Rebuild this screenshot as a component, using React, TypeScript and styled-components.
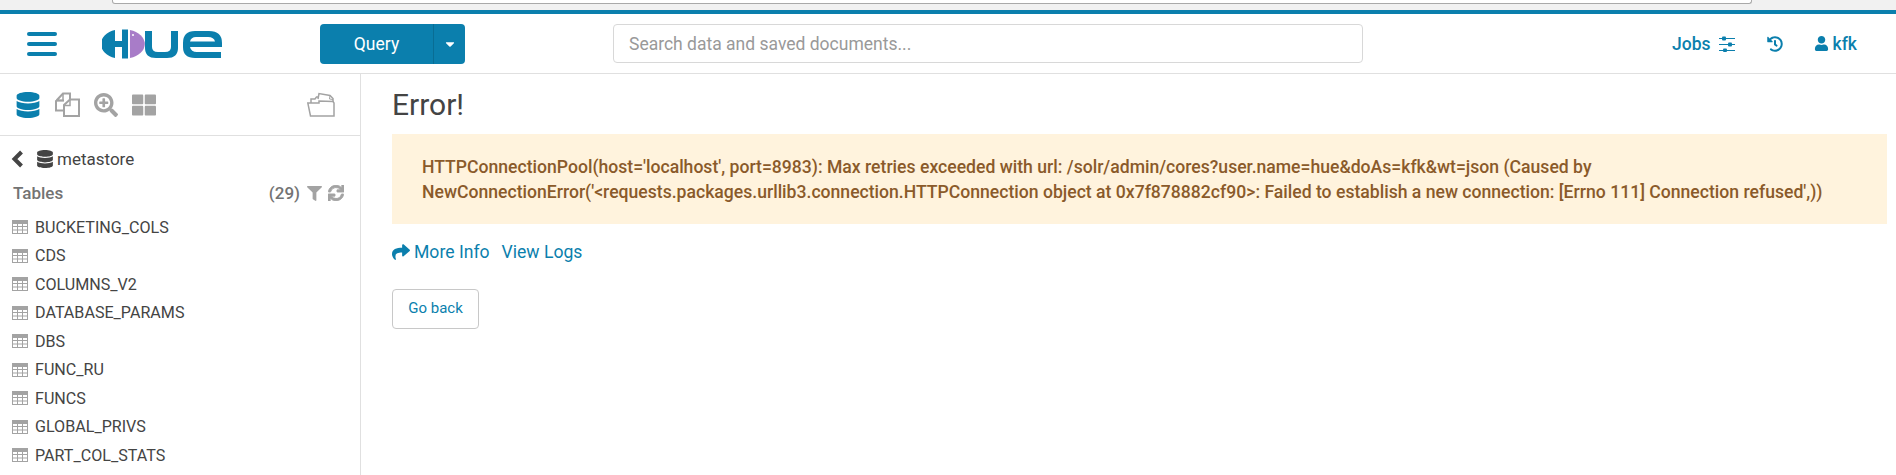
import React from 'react';
import styled, { createGlobalStyle } from 'styled-components';
import { FaCaretDown, FaDatabase, FaFilter, FaHistory, FaShare, FaSync, FaThLarge, FaUser, FaSearchPlus } from 'react-icons/fa';

const TABLES = ['BUCKETING_COLS', 'CDS', 'COLUMNS_V2', 'DATABASE_PARAMS', 'DBS', 'FUNC_RU', 'FUNCS', 'GLOBAL_PRIVS', 'PART_COL_STATS'];

const BLUE = '#0b7fad';
const GREY = '#a3a3a3';

const Global = createGlobalStyle`
  html, body { margin: 0; padding: 0; height: 475px; overflow: hidden; background: #fff; }
  body { font-family: Roboto, "Liberation Sans", sans-serif; color: #444; }
`;

const Page = styled.div`
  display: flex;
  flex-direction: column;
  height: 475px;
  overflow: hidden;
`;

const Chrome = styled.div`
  height: 10px;
  background: #f1f1f1;
  padding: 0 144px 0 112px;
`;

const AddressBox = styled.div`
  height: 3px;
  background: #fff;
  border: 1px solid #a9a9a9;
  border-top: 0;
  border-radius: 0 0 3px 3px;
`;

const Nav = styled.header`
  height: 59px;
  border-top: 4px solid ${BLUE};
  border-bottom: 1px solid #e0e0e0;
  display: flex;
  align-items: center;
  flex-shrink: 0;
`;

const Burger = styled.div`
  width: 102px;
  padding-left: 27px;
  box-sizing: border-box;
  display: flex;
  flex-direction: column;
  gap: 6px;
`;

const BurgerLine = styled.span`
  display: block;
  width: 30px;
  height: 4px;
  border-radius: 2px;
  background: ${BLUE};
`;

const Logo = styled.svg`
  width: 120px;
  height: 30px;
  margin-right: 98px;
`;

const QueryGroup = styled.div`
  display: flex;
  width: 145px;
  height: 40px;
  border-radius: 4px;
  background: ${BLUE};
  color: #fff;
  margin-right: 148px;
`;

const QueryLabel = styled.div`
  width: 113px;
  display: flex;
  align-items: center;
  justify-content: center;
  font-size: 17.5px;
  border-right: 1px solid #096d94;
`;

const QueryCaret = styled.div`
  flex: 1;
  display: flex;
  align-items: center;
  justify-content: center;
  font-size: 14px;
`;

const Search = styled.div`
  width: 750px;
  height: 39px;
  box-sizing: border-box;
  border: 1px solid #d8d8d8;
  border-radius: 4px;
  padding: 0 15px;
  display: flex;
  align-items: center;
  color: #999;
  font-size: 17.5px;
`;

const NavRight = styled.div`
  margin-left: auto;
  display: flex;
  align-items: center;
  padding-right: 39px;
  color: ${BLUE};
  font-size: 17.5px;
  font-weight: 500;
`;

const NavItem = styled.span<{ $gap: number; $after: number }>`
  display: flex;
  align-items: center;
  gap: ${(p) => p.$gap}px;
  margin-right: ${(p) => p.$after}px;
`;

const Body = styled.div`
  display: flex;
  flex: 1;
  min-height: 0;
`;

const Side = styled.aside`
  width: 361px;
  box-sizing: border-box;
  border-right: 1px solid #e0e0e0;
  flex-shrink: 0;
  overflow: hidden;
`;

const SideTabs = styled.div`
  height: 62px;
  box-sizing: border-box;
  border-bottom: 1px solid #e0e0e0;
  display: flex;
  align-items: center;
  padding: 0 25px 0 15px;
  gap: 14px;
`;

const TabIcon = styled.span<{ $active?: boolean; $size: number }>`
  display: flex;
  color: ${(p) => (p.$active ? BLUE : GREY)};
  font-size: ${(p) => p.$size}px;
`;

const FolderIcon = styled(TabIcon)`
  margin-left: auto;
`;

const Crumb = styled.div`
  display: flex;
  align-items: center;
  height: 46px;
  padding-left: 11px;
  font-size: 17px;
  color: #444;
`;

const BackGlyph = styled.svg`
  width: 13px;
  height: 18px;
  margin-right: 12px;
`;

const DbIcon = styled.span`
  display: flex;
  font-size: 18px;
  margin-right: 3px;
`;

const TablesHead = styled.div`
  display: flex;
  align-items: center;
  height: 20px;
  margin: 1px 0 10px;
  padding: 0 16px 0 13px;
  font-size: 17px;
  font-weight: 500;
  color: #737373;
`;

const Count = styled.span`
  margin-left: auto;
  margin-right: 7px;
`;

const HeadIcon = styled.span`
  display: flex;
  color: ${GREY};
  font-size: 15px;
  margin-right: 6px;
  &:last-child { margin-right: 0; font-size: 16px; }
`;

const TableRow = styled.div`
  display: flex;
  align-items: center;
  height: 28.5px;
  padding-left: 12px;
  font-size: 16.1px;
  color: #444;
`;

const TableGlyph = styled.svg`
  width: 16px;
  height: 14px;
  margin-right: 7px;
`;

const Main = styled.main`
  flex: 1;
  min-width: 0;
  padding: 0 9px 0 31px;
`;

const Title = styled.h1`
  margin: 0;
  height: 60px;
  display: flex;
  align-items: center;
  font-size: 30px;
  font-weight: 400;
  color: #444;
`;

const Alert = styled.div`
  background: #fff3dd;
  color: #8a5a2a;
  font-size: 17.6px;
  font-weight: 500;
  line-height: 25px;
  height: 90px;
  box-sizing: border-box;
  padding: 21px 30px 0;
`;

const Links = styled.div`
  display: flex;
  align-items: center;
  gap: 12px;
  margin-top: 18px;
  color: ${BLUE};
  font-size: 17.6px;
`;

const LinkItem = styled.span`
  display: flex;
  align-items: center;
  gap: 4px;
`;

const BackButton = styled.button`
  display: block;
  margin-top: 27px;
  width: 87px;
  height: 40px;
  padding: 0 0 2px;
  border: 1px solid #c8c8c8;
  border-radius: 4px;
  background: #fff;
  color: ${BLUE};
  font-family: inherit;
  font-size: 15px;
`;

function SlidersGlyph() {
  return (
    <svg width="16" height="16" viewBox="0 0 16 16" fill="currentColor">
      <rect x="0" y="2" width="16" height="1" />
      <rect x="3" y="0.5" width="4" height="4" rx="1" />
      <rect x="0" y="8" width="16" height="1" />
      <rect x="9" y="6.5" width="4" height="4" rx="1" />
      <rect x="0" y="14" width="16" height="1" />
      <rect x="4" y="12.5" width="4" height="3.5" rx="1" />
    </svg>
  );
}

function FilesGlyph() {
  return (
    <svg width="25" height="25" viewBox="0 0 25 25" fill="none" stroke="currentColor" strokeWidth="2">
      <path d="M9 8.5 H2 V8 L8 1.5 H15 V7 M2 8.5 L1 9 V18.5 H8" />
      <path d="M8 1.5 V8.5 H1.5" strokeWidth="1.5" />
      <path d="M15 7.5 H24 V24 H9 V13 Z" fill="#fff" />
      <path d="M15 8 V13.5 H9" strokeWidth="1.5" />
    </svg>
  );
}

function FolderGlyph() {
  return (
    <svg width="28" height="25" viewBox="0 0 28 25" fill="none" stroke="currentColor" strokeWidth="1.5">
      <path d="M11 7 L12 1.5 L23 3.5 L26 6.5 V10" />
      <path d="M23 3.5 L22.5 7 L26 7.5" strokeWidth="1" />
      <path d="M4 11 V7 H8 L9.5 5 H11" />
      <path d="M12 11 V9 L26 9.5 L27 11 V24 H3.5 L0.8 11 Z" />
    </svg>
  );
}

function TableGlyphIcon() {
  return (
    <TableGlyph viewBox="0 0 16 14" fill="none">
      <rect x="0.5" y="0.5" width="15" height="13" stroke={GREY} />
      <rect x="0.5" y="0.5" width="15" height="3" fill={GREY} stroke={GREY} />
      <path d="M0 6.5 H16 M0 10 H16 M5.5 3 V14 M10.5 3 V14" stroke={GREY} />
    </TableGlyph>
  );
}

export default function App() {
  return (
    <Page>
      <Global />
      <Chrome><AddressBox /></Chrome>
      <Nav>
        <Burger><BurgerLine /><BurgerLine /><BurgerLine /></Burger>
        <Logo viewBox="0 0 120 30">
          <path d="M13 1 A19 14.5 0 0 0 13 29 Z" fill={BLUE} />
          <rect x="12" y="12" width="9" height="6" fill={BLUE} />
          <path d="M20 0.5 H26 V29.5 H20 Z" fill={BLUE} />
          <path d="M28 1 A20 14.5 0 0 1 28 29 Z" fill="#a87cc8" />
          <circle cx="31" cy="6" r="1" fill="#fff" />
          <path d="M43 2 H50 V18 Q50 23 56 23 H63 Q69 23 69 18 V2 H76 V19 Q76 29 65 29 H54 Q43 29 43 19 Z" fill={BLUE} />
          <path d="M81 14 Q81 2 93 2 H107 Q120 2 120 14 V18 H88 Q89 23 95 23 H119 V29 H93 Q81 29 81 18 Z M88 12.5 H113 Q112 8 106 8 H94 Q89 8 88 12.5 Z" fill={BLUE} fillRule="evenodd" />
        </Logo>
        <QueryGroup>
          <QueryLabel>Query</QueryLabel>
          <QueryCaret><FaCaretDown /></QueryCaret>
        </QueryGroup>
        <Search>Search data and saved documents...</Search>
        <NavRight>
          <NavItem $gap={8} $after={32}>Jobs <SlidersGlyph /></NavItem>
          <NavItem $gap={0} $after={31}><FaHistory size={16} /></NavItem>
          <NavItem $gap={4} $after={0}><FaUser size={15} />kfk</NavItem>
        </NavRight>
      </Nav>
      <Body>
        <Side>
          <SideTabs>
            <TabIcon $active $size={26}><FaDatabase /></TabIcon>
            <TabIcon $size={25}><FilesGlyph /></TabIcon>
            <TabIcon $size={24}><FaSearchPlus /></TabIcon>
            <TabIcon $size={24}><FaThLarge /></TabIcon>
            <FolderIcon $size={28}><FolderGlyph /></FolderIcon>
          </SideTabs>
          <Crumb>
            <BackGlyph viewBox="0 0 13 18" fill="none">
              <path d="M10.5 2 L3.5 9 L10.5 16" stroke="#444" strokeWidth="4" />
            </BackGlyph>
            <DbIcon><FaDatabase /></DbIcon>
            metastore
          </Crumb>
          <TablesHead>
            Tables
            <Count>(29)</Count>
            <HeadIcon><FaFilter /></HeadIcon>
            <HeadIcon><FaSync stroke="currentColor" strokeWidth={30} /></HeadIcon>
          </TablesHead>
          {TABLES.map((name) => (
            <TableRow key={name}>
              <TableGlyphIcon />
              {name}
            </TableRow>
          ))}
        </Side>
        <Main>
          <Title>Error!</Title>
          <Alert>
            HTTPConnectionPool(host='localhost', port=8983): Max retries exceeded with url: /solr/admin/cores?user.name=hue&amp;doAs=kfk&amp;wt=json (Caused by NewConnectionError('&lt;requests.packages.urllib3.connection.HTTPConnection object at 0x7f878882cf90&gt;: Failed to establish a new connection: [Errno 111] Connection refused',))
          </Alert>
          <Links>
            <LinkItem><FaShare size={18} />More Info</LinkItem>
            <LinkItem>View Logs</LinkItem>
          </Links>
          <BackButton>Go back</BackButton>
        </Main>
      </Body>
    </Page>
  );
}
